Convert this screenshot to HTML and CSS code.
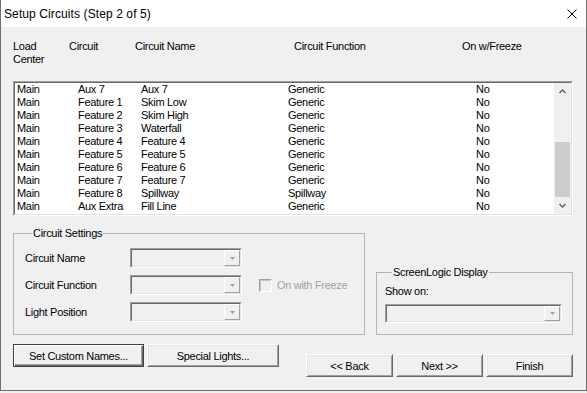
FILE: index.html
```html
<!DOCTYPE html>
<html lang="en">

<head>
    <meta charset="UTF-8">
    <title>Setup Circuits (Step 2 of 5)</title>
    <link rel="stylesheet" href="styles.css">
</head>

<body>
    <div class="window">
        <div class="titlebar">
            <span>Setup Circuits (Step 2 of 5)</span>
            <svg class="close" width="10" height="10" viewBox="0 0 10 10">
                <path d="M0.5 0.5 L9.5 9.5 M9.5 0.5 L0.5 9.5" stroke="#000" stroke-width="1" fill="none" />
            </svg>
        </div>

        <div class="content">
            <div class="list-header">
                <div>Load<br>Center</div>
                <div>Circuit</div>
                <div>Circuit Name</div>
                <div>Circuit Function</div>
                <div>On w/Freeze</div>
            </div>

            <div class="listbox">
                <div class="listbox-inner">
                    <div class="rows">
                        <div class="row"><span>Main</span><span>Aux 7</span><span>Aux 7</span><span>Generic</span><span>No</span></div>
                        <div class="row"><span>Main</span><span>Feature 1</span><span>Skim Low</span><span>Generic</span><span>No</span></div>
                        <div class="row"><span>Main</span><span>Feature 2</span><span>Skim High</span><span>Generic</span><span>No</span></div>
                        <div class="row"><span>Main</span><span>Feature 3</span><span>Waterfall</span><span>Generic</span><span>No</span></div>
                        <div class="row"><span>Main</span><span>Feature 4</span><span>Feature 4</span><span>Generic</span><span>No</span></div>
                        <div class="row"><span>Main</span><span>Feature 5</span><span>Feature 5</span><span>Generic</span><span>No</span></div>
                        <div class="row"><span>Main</span><span>Feature 6</span><span>Feature 6</span><span>Generic</span><span>No</span></div>
                        <div class="row"><span>Main</span><span>Feature 7</span><span>Feature 7</span><span>Generic</span><span>No</span></div>
                        <div class="row"><span>Main</span><span>Feature 8</span><span>Spillway</span><span>Spillway</span><span>No</span></div>
                        <div class="row"><span>Main</span><span>Aux Extra</span><span>Fill Line</span><span>Generic</span><span>No</span></div>
                    </div>
                    <div class="scrollbar">
                        <div class="sb-arrow">
                            <svg width="7" height="5" viewBox="0 0 7 5"><path d="M0.5 4 L3.5 1 L6.5 4" stroke="#606060" stroke-width="1.4" fill="none" /></svg>
                        </div>
                        <div class="sb-track">
                            <div class="sb-thumb"></div>
                        </div>
                        <div class="sb-arrow">
                            <svg width="7" height="5" viewBox="0 0 7 5"><path d="M0.5 1 L3.5 4 L6.5 1" stroke="#606060" stroke-width="1.4" fill="none" /></svg>
                        </div>
                    </div>
                </div>
            </div>

            <div class="settings">
                <fieldset class="group circuit-settings">
                    <legend>Circuit Settings</legend>
                    <div class="form-grid">
                        <label>Circuit Name</label>
                        <div class="combo"><div class="combo-inner"><div class="combo-btn"><svg width="5" height="3" viewBox="0 0 5 3"><polygon points="0,0 5,0 2.5,3" fill="#a0a0a0" /></svg></div></div></div>
                        <div></div>

                        <label>Circuit Function</label>
                        <div class="combo"><div class="combo-inner"><div class="combo-btn"><svg width="5" height="3" viewBox="0 0 5 3"><polygon points="0,0 5,0 2.5,3" fill="#a0a0a0" /></svg></div></div></div>
                        <div class="check">
                            <span class="check-box"></span>
                            <span class="disabled">On with Freeze</span>
                        </div>

                        <label>Light Position</label>
                        <div class="combo"><div class="combo-inner"><div class="combo-btn"><svg width="5" height="3" viewBox="0 0 5 3"><polygon points="0,0 5,0 2.5,3" fill="#a0a0a0" /></svg></div></div></div>
                        <div></div>
                    </div>
                </fieldset>

                <fieldset class="group screenlogic">
                    <legend>ScreenLogic Display</legend>
                    <div class="show-label">Show on:</div>
                    <div class="combo wide"><div class="combo-inner"><div class="combo-btn"><svg width="5" height="3" viewBox="0 0 5 3"><polygon points="0,0 5,0 2.5,3" fill="#a0a0a0" /></svg></div></div></div>
                </fieldset>
            </div>

            <div class="buttons">
                <div class="button-group">
                    <button class="btn default wide-btn">Set Custom Names...</button>
                    <button class="btn wide-btn">Special Lights...</button>
                </div>
                <div class="button-group wizard">
                    <button class="btn">&lt;&lt; Back</button>
                    <button class="btn">Next &gt;&gt;</button>
                    <button class="btn">Finish</button>
                </div>
            </div>
        </div>
    </div>
</body>

</html>
```

FILE: styles.css
```css
* {
    margin: 0;
    padding: 0;
    box-sizing: border-box;
}

body {
    background: #f0f0f0;
    font-family: 'Liberation Sans', Arial, sans-serif;
    font-size: 11px;
    letter-spacing: -0.3px;
    color: #000;
}

.window {
    width: 587px;
    height: 391px;
    background: #f0f0f0;
    border: 1px solid #6f6f6f;
    border-top: none;
}

.titlebar {
    height: 27px;
    background: #fff;
    display: flex;
    align-items: center;
    justify-content: space-between;
    padding: 0 9px 0 3px;
    font-size: 12px;
    letter-spacing: 0.1px;
}

.content {
    padding: 13px 13px 0 12px;
}

.list-header {
    display: grid;
    grid-template-columns: 56px 66px 159px 168px 1fr;
    line-height: 13px;
    height: 26px;
    margin-bottom: 15px;
}

/* sunken list box */
.listbox {
    height: 135px;
    border: 1px solid;
    border-color: #a0a0a0 #fff #fff #a0a0a0;
}

.listbox-inner {
    height: 100%;
    display: flex;
    background: #fff;
    border: 1px solid;
    border-color: #696969 #e3e3e3 #e3e3e3 #696969;
}

.rows {
    flex: 1;
    padding-left: 2px;
}

.row {
    display: grid;
    grid-template-columns: 61px 63px 147px 188px 1fr;
    height: 13px;
    line-height: 13px;
    white-space: nowrap;
}

.scrollbar {
    width: 17px;
    background: #f0f0f0;
    display: flex;
    flex-direction: column;
}

.sb-arrow {
    height: 17px;
    display: flex;
    align-items: center;
    justify-content: center;
}

.sb-track {
    flex: 1;
    display: flex;
    flex-direction: column;
    justify-content: flex-end;
}

.sb-thumb {
    height: 55px;
    margin: 0 1px;
    background: #cdcdcd;
}

/* group boxes */
.settings {
    display: flex;
    align-items: flex-end;
    gap: 11px;
    margin-top: 10px;
}

.group {
    border: 1px solid #b4b4b4;
}

.group legend {
    margin-left: 7px;
    padding: 0 1px;
    line-height: 14px;
}

.circuit-settings {
    width: 352px;
    padding: 8px 0 12px 11px;
}

.screenlogic {
    width: 197px;
    padding: 6px 0 11px 8px;
}

.form-grid {
    display: grid;
    grid-template-columns: 105px 112px auto;
    grid-auto-rows: 20px;
    row-gap: 7px;
    align-items: center;
}

.show-label {
    line-height: 13px;
    margin-bottom: 6px;
}

.combo {
    width: 112px;
    height: 20px;
    border: 1px solid;
    border-color: #a0a0a0 #fff #fff #a0a0a0;
}

.combo.wide {
    width: 177px;
    height: 19px;
}

.combo-inner {
    height: 100%;
    display: flex;
    justify-content: flex-end;
    border: 1px solid;
    border-color: #696969 #e3e3e3 #e3e3e3 #696969;
    background: #f0f0f0;
}

.combo-btn {
    width: 16px;
    display: flex;
    align-items: center;
    justify-content: center;
    border: 1px solid;
    border-color: #fff #a0a0a0 #a0a0a0 #fff;
}

.check {
    display: flex;
    align-items: center;
    gap: 5px;
    margin-left: 17px;
}

.check-box {
    width: 13px;
    height: 13px;
    border: 1px solid;
    border-color: #a0a0a0 #fff #fff #a0a0a0;
    box-shadow: inset 1px 1px #c4c4c4;
}

.disabled {
    color: #a0a0a0;
}

/* push buttons */
.buttons {
    display: flex;
    justify-content: space-between;
    align-items: flex-start;
    margin-top: 9px;
}

.button-group {
    display: flex;
    gap: 3px;
}

.wizard {
    margin-top: 10px;
}

.btn {
    width: 87px;
    height: 23px;
    font-family: inherit;
    font-size: 11px;
    letter-spacing: -0.3px;
    color: #000;
    background: #f0f0f0;
    border: 1px solid;
    border-color: #fff #696969 #696969 #fff;
    box-shadow: inset 1px 1px #e3e3e3, inset -1px -1px #a0a0a0;
}

.wide-btn {
    width: 132px;
}

.btn.default {
    width: 131px;
    border: 1px solid #404040;
    box-shadow: inset 1px 1px #fff, inset -1px -1px #696969, inset -2px -2px #a0a0a0;
}
```
